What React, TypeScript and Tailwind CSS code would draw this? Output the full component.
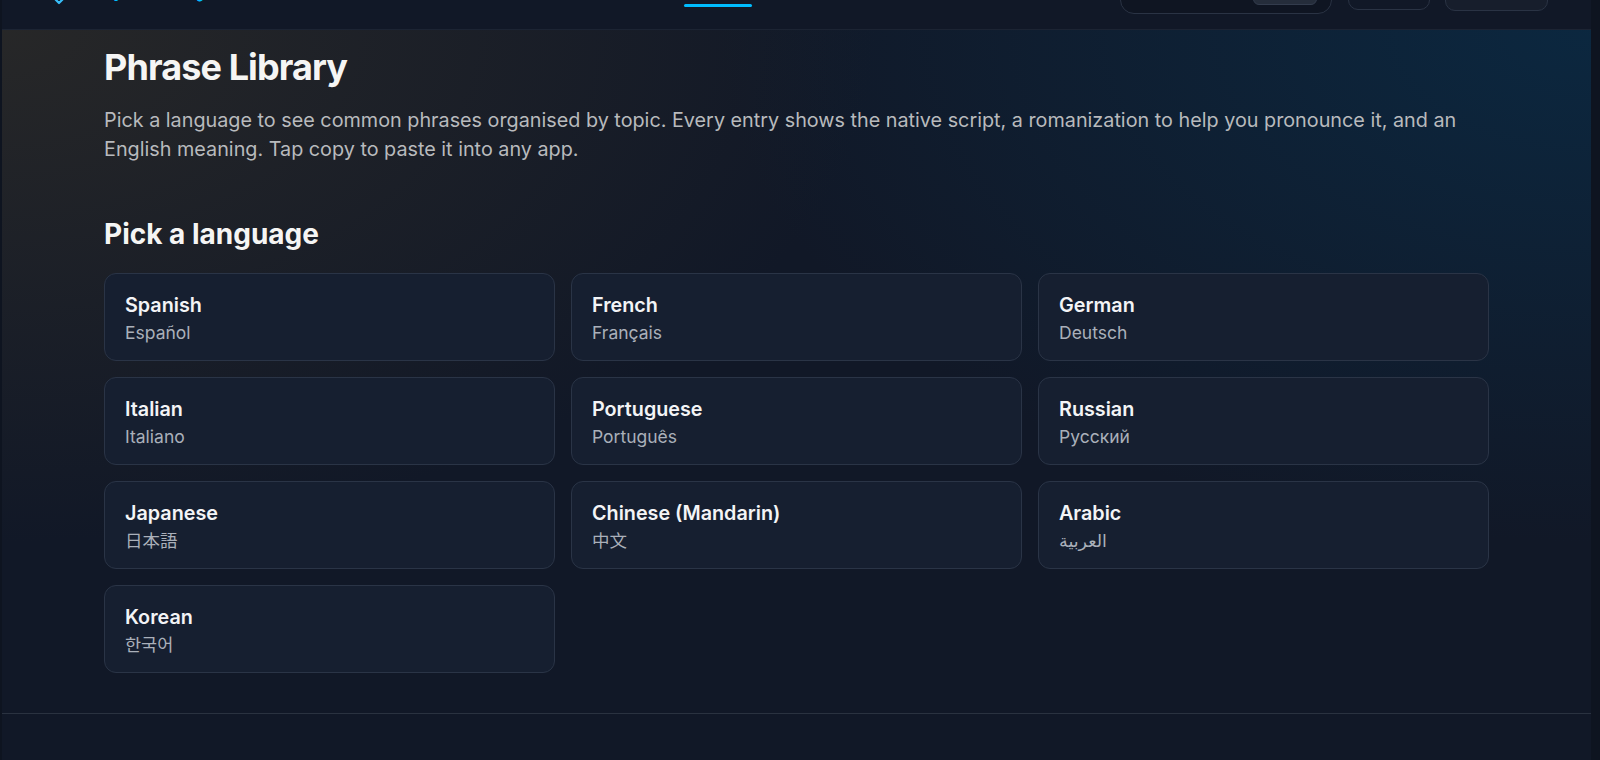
import React from 'react';

type Language = {
  name: string;
  native: string;
  font?: string;
};

const languages: Language[] = [
  { name: 'Spanish', native: 'Español' },
  { name: 'French', native: 'Français' },
  { name: 'German', native: 'Deutsch' },
  { name: 'Italian', native: 'Italiano' },
  { name: 'Portuguese', native: 'Português' },
  { name: 'Russian', native: 'Русский' },
  { name: 'Japanese', native: '日本語', font: "font-['Inter','Noto_Sans_CJK_JP',sans-serif]" },
  { name: 'Chinese (Mandarin)', native: '中文', font: "font-['Inter','Noto_Sans_CJK_SC',sans-serif]" },
  { name: 'Arabic', native: 'العربية', font: "font-['Inter','DejaVu_Sans',sans-serif]" },
  { name: 'Korean', native: '한국어', font: "font-['Inter','Noto_Sans_CJK_KR',sans-serif]" },
];

const navLinks = ['Home', 'Lessons', 'Phrases', 'Practice'];

function Logo() {
  return (
    <div className="-mt-[8px] flex w-[508px] shrink-0 items-center">
      <svg width="28" height="28" viewBox="0 0 28 28" fill="none" className="mt-[6px]">
        <path
          d="M4 6 L14 2 L24 6 L24 14 L14 24 L4 14 Z"
          stroke="#38bdf8"
          strokeWidth="2.2"
          strokeLinejoin="round"
        />
      </svg>
      <span className="ml-[27px] text-[21px] font-bold tracking-tight text-sky-400">Speakeasy</span>
    </div>
  );
}

function Header() {
  return (
    <header className="flex h-[72px] items-center border-b border-[#1c2433] bg-[#111827] px-[43px]">
      <Logo />
      <nav className="-mt-[3px] flex items-center gap-1">
        {navLinks.map((link) => (
          <a
            key={link}
            className={`flex flex-col items-stretch text-sm font-medium ${
              link === 'Phrases' ? 'text-sky-400' : 'text-gray-400'
            }`}
          >
            <span className="px-[7px] text-center leading-5">{link}</span>
            <span
              className={`mt-[6px] h-[3px] rounded-full ${link === 'Phrases' ? 'bg-sky-400' : 'bg-transparent'}`}
            />
          </a>
        ))}
      </nav>
      <div className="ml-auto flex items-center">
        <div className="flex h-10 w-[212px] items-center justify-between rounded-[14px] border border-[#2a3344] bg-[#0f1522] pl-3 pr-[14px]">
          <span className="-mt-[4px] text-sm text-gray-500">Search</span>
          <span className="flex h-[22px] w-16 items-center justify-center rounded-md border border-[#333c4d] bg-[#252d3b] pb-1 text-xs text-gray-400">
            ⌘ K
          </span>
        </div>
        <button className="ml-4 h-8 w-[82px] rounded-[10px] border border-[#2a3344] bg-[#111827] pb-2 text-sm text-gray-300">
          Saved
        </button>
        <button className="ml-[15px] h-[34px] w-[103px] rounded-[10px] border border-[#2a3344] bg-[#171e2c] pb-2 text-sm text-gray-200">
          Account
        </button>
      </div>
    </header>
  );
}

function LanguageCard({ lang }: { lang: Language }) {
  return (
    <button className="flex h-[88px] flex-col justify-center rounded-xl border border-[#2a3446] bg-[#161f30] px-5 pt-[3px] text-left">
      <span className="text-[19.75px] font-semibold leading-[26px] text-[#f3f4f6]">{lang.name}</span>
      <span className={`mt-[3px] text-[17.5px] leading-6 text-[#aab0ba] ${lang.font ?? ''}`}>{lang.native}</span>
    </button>
  );
}

export default function App() {
  return (
    <div className="min-h-screen bg-[#0e1420] pl-[2px] pr-[9px] font-['Inter',sans-serif]">
      <div className="-mt-[42px] bg-[#111827]">
        <Header />
        <main className="bg-[#111827] bg-[radial-gradient(ellipse_55%_75%_at_0%_0%,rgba(40,40,40,0.95),transparent),radial-gradient(ellipse_55%_75%_at_100%_0%,rgba(11,41,66,0.9),transparent)] pb-10 pt-[17px]">
          <div className="mx-auto w-full max-w-[1385px]">
            <h1 className="text-4xl font-bold leading-10 tracking-tight text-[#f5f5f4]">Phrase Library</h1>
            <p className="mt-[19px] text-[19.8px] leading-[29.3px] text-[#b8babd]">
              Pick a language to see common phrases organised by topic. Every entry shows the native script, a
              romanization to help you pronounce it, and an English meaning. Tap copy to paste it into any app.
            </p>

            <h2 className="mt-[51px] text-[28px] font-bold leading-9 text-[#f5f5f4]">Pick a language</h2>

            <div className="mt-[21px] grid grid-cols-3 gap-4">
              {languages.map((lang) => (
                <LanguageCard key={lang.name} lang={lang} />
              ))}
            </div>
          </div>
        </main>
        <footer className="h-[120px] border-t border-[#2a3240] bg-[#111827] pt-[70px] text-center text-sm text-gray-500">
          Speakeasy · Phrase Library
        </footer>
      </div>
    </div>
  );
}
